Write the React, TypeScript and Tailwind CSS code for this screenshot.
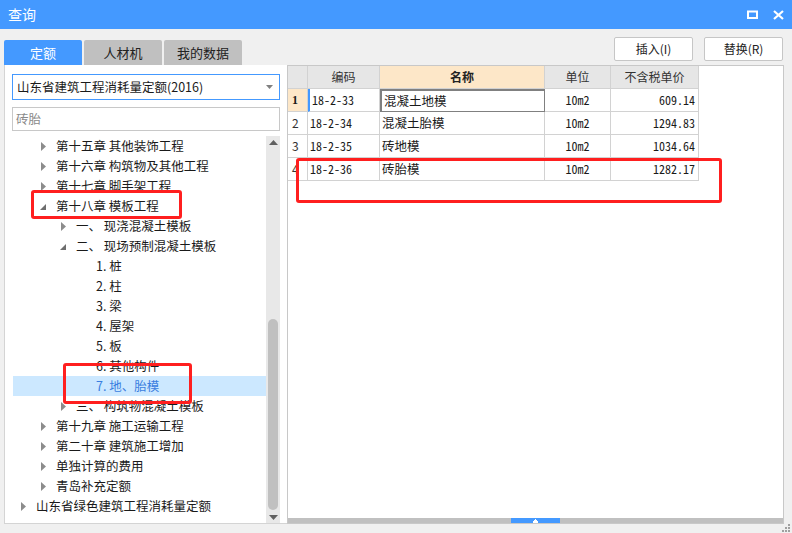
import React from "react";

type Node = {
  label: string;
  level: 0 | 1 | 2 | 3;
  state: "collapsed" | "expanded" | "leaf";
  selected?: boolean;
};

const tree: Node[] = [
  { label: "第十五章 其他装饰工程", level: 1, state: "collapsed" },
  { label: "第十六章 构筑物及其他工程", level: 1, state: "collapsed" },
  { label: "第十七章 脚手架工程", level: 1, state: "collapsed" },
  { label: "第十八章 模板工程", level: 1, state: "expanded" },
  { label: "一、 现浇混凝土模板", level: 2, state: "collapsed" },
  { label: "二、 现场预制混凝土模板", level: 2, state: "expanded" },
  { label: "1. 桩", level: 3, state: "leaf" },
  { label: "2. 柱", level: 3, state: "leaf" },
  { label: "3. 梁", level: 3, state: "leaf" },
  { label: "4. 屋架", level: 3, state: "leaf" },
  { label: "5. 板", level: 3, state: "leaf" },
  { label: "6. 其他构件", level: 3, state: "leaf" },
  { label: "7. 地、胎模", level: 3, state: "leaf", selected: true },
  { label: "三、 构筑物混凝土模板", level: 2, state: "collapsed" },
  { label: "第十九章 施工运输工程", level: 1, state: "collapsed" },
  { label: "第二十章 建筑施工增加", level: 1, state: "collapsed" },
  { label: "单独计算的费用", level: 1, state: "collapsed" },
  { label: "青岛补充定额", level: 1, state: "collapsed" },
  { label: "山东省绿色建筑工程消耗量定额", level: 0, state: "collapsed" },
];

const indent = ["pl-[7px]", "pl-[27px]", "pl-[47px]", "pl-[67px]"];

const rows = [
  { code: "18-2-33", name: "混凝土地模", unit: "10m2", price: "609.14" },
  { code: "18-2-34", name: "混凝土胎模", unit: "10m2", price: "1294.83" },
  { code: "18-2-35", name: "砖地模", unit: "10m2", price: "1034.64" },
  { code: "18-2-36", name: "砖胎模", unit: "10m2", price: "1282.17" },
];

const mono = "font-['Noto_Sans_Mono_CJK_SC','Liberation_Mono',monospace]";

function Arrow({ state }: { state: Node["state"] }) {
  if (state === "leaf") return <span className="w-4 shrink-0" />;
  if (state === "expanded")
    return (
      <span className="w-4 shrink-0 flex items-center">
        <svg width="6" height="6" className="mt-[2px]">
          <polygon points="6,0 6,6 0,6" fill="#6e6e6e" />
        </svg>
      </span>
    );
  return (
    <span className="w-4 shrink-0 flex items-center pl-[1px]">
      <svg width="5" height="9">
        <polygon points="0,0 5,4.5 0,9" fill="#8c8c8c" />
      </svg>
    </span>
  );
}

export default function App() {
  return (
    <div className="relative w-[792px] h-[533px] bg-[#f0f0f0] flex flex-col overflow-hidden font-['Noto_Sans_CJK_SC','Liberation_Sans',sans-serif] text-[12px] text-[#1a1a1a]">
      {/* title bar */}
      <div className="h-[29px] shrink-0 bg-[#4499ff] flex items-center justify-between pl-[8px] pr-[8px]">
        <span className="text-white text-[14px]">查询</span>
        <div className="flex items-center gap-[15px]">
          <svg width="11" height="9" viewBox="0 0 11 9">
            <rect x="1" y="1.5" width="9" height="6.5" fill="none" stroke="white" strokeWidth="2" />
          </svg>
          <svg width="11" height="10" viewBox="0 0 11 10">
            <path d="M1 1 L10 9 M10 1 L1 9" stroke="white" strokeWidth="2.2" />
          </svg>
        </div>
      </div>

      {/* tabs + buttons */}
      <div className="h-[36px] shrink-0 flex justify-between pl-[4px] pr-[9px]">
        <div className="flex items-end gap-[2px]">
          <div className="w-[78px] h-[25px] rounded-t-[2px] bg-[#4499ff] text-white text-[13px] flex items-center justify-center">定额</div>
          <div className="w-[78px] h-[25px] rounded-t-[2px] bg-[#c0c0c0] text-[#222] text-[13px] flex items-center justify-center">人材机</div>
          <div className="w-[78px] h-[25px] rounded-t-[2px] bg-[#c0c0c0] text-[#222] text-[13px] flex items-center justify-center">我的数据</div>
        </div>
        <div className="flex gap-[11px] pt-[8px]">
          <button className="w-[79px] h-[24px] bg-white border border-[#c6c6c6] rounded-[2px] text-[12px] text-[#222]">插入(I)</button>
          <button className="w-[79px] h-[24px] bg-white border border-[#c6c6c6] rounded-[2px] text-[12px] text-[#222]">替换(R)</button>
        </div>
      </div>

      {/* content */}
      <div className="h-[459px] shrink-0 flex pl-[4px]">
        {/* left panel */}
        <div className="w-[283px] bg-white border-l border-b border-[#d4d4d4] flex flex-col pl-[7px] pr-[7px]">
          <div className="mt-[9px] h-[26px] border border-[#4499ff] flex items-center justify-between pl-[4px] pr-[6px] bg-white">
            <span className="text-[12.5px]">山东省建筑工程消耗量定额(2016)</span>
            <svg width="7" height="4">
              <polygon points="0,0 7,0 3.5,4" fill="#808080" />
            </svg>
          </div>
          <div className="mt-[7px] h-[24px] border border-[#c8c8c8] flex items-center pl-[3px] text-[#8a8a8a] text-[12.5px]">砖胎</div>
          <div className="mt-[5px] h-[387px] flex">
            <div className="flex-1 flex flex-col pl-[1px]">
              {tree.map((n) => (
                <div
                  key={n.label}
                  className={`h-[20px] flex items-center ${indent[n.level]} ${n.selected ? "bg-[#cce8ff] text-[#3a7ee0]" : ""}`}
                >
                  <Arrow state={n.state} />
                  <span className="text-[12.5px] whitespace-nowrap">{n.label}</span>
                </div>
              ))}
            </div>
            {/* scrollbar */}
            <div className="w-[14px] bg-[#e8e8e8] flex flex-col items-center">
              <svg width="9" height="5" className="mt-[4px]">
                <polygon points="4.5,0 9,5 0,5" fill="#606060" />
              </svg>
              <div className="mt-[174px] w-[10px] h-[191px] rounded-full bg-[#c0c0c0]" />
              <svg width="9" height="5" className="mt-[5px]">
                <polygon points="0,0 9,0 4.5,5" fill="#606060" />
              </svg>
            </div>
          </div>
        </div>

        {/* right panel */}
        <div className="w-[497px] bg-white border border-[#c8c8c8] flex flex-col">
          <div className="grid grid-cols-[20px_72px_165px_66px_88px] w-[408px]">
            <div className="h-[23px] bg-[#e6e6e6] border-r border-b border-[#d2d2d2]" />
            <div className="h-[23px] bg-[#e6e6e6] border-r border-b border-[#d2d2d2] flex items-center justify-center text-[#333]">编码</div>
            <div className="h-[23px] bg-[#fde7c8] border-r border-b border-[#d2d2d2] flex items-center justify-center font-bold text-[#222]">名称</div>
            <div className="h-[23px] bg-[#e6e6e6] border-r border-b border-[#d2d2d2] flex items-center justify-center text-[#333]">单位</div>
            <div className="h-[23px] bg-[#e6e6e6] border-r border-b border-[#d2d2d2] flex items-center justify-center text-[#333]">不含税单价</div>
            {rows.map((r, i) => (
              <React.Fragment key={r.code}>
                <div
                  className={`h-[23px] border-r border-b border-[#d2d2d2] flex items-center pl-[4px] ${
                    i === 0 ? "bg-[#fde7c8] font-bold font-['Liberation_Serif',serif]" : "text-[#333]"
                  }`}
                >
                  {i + 1}
                </div>
                <div
                  className={`h-[23px] border-r border-b border-[#d2d2d2] flex items-center pl-[2px] ${mono} ${
                    i === 0 ? "border-l-2 border-l-[#4499ff] pl-0" : ""
                  }`}
                >
                  {r.code}
                </div>
                <div
                  className={`h-[23px] border-r border-b flex items-center pl-[2px] text-[12.5px] ${
                    i === 0 ? "border-2 border-[#808080]" : "border-[#d2d2d2]"
                  }`}
                >
                  {r.name}
                </div>
                <div className={`h-[23px] border-r border-b border-[#d2d2d2] flex items-center justify-center ${mono}`}>{r.unit}</div>
                <div className={`h-[23px] border-r border-b border-[#d2d2d2] flex items-center justify-end pr-[3px] ${mono}`}>{r.price}</div>
              </React.Fragment>
            ))}
          </div>
          <div className="flex-1" />
          <div className="h-[5px] bg-[#c0c0c0] flex justify-center">
            <div className="w-[49px] h-[5px] bg-[#4499ff] flex items-center justify-center">
              <svg width="7" height="4">
                <rect x="3" y="0" width="1" height="1" fill="white" />
                <rect x="2" y="1" width="3" height="1" fill="white" />
                <rect x="1" y="2" width="5" height="2" fill="white" />
              </svg>
            </div>
          </div>
        </div>
      </div>

      {/* bottom strip with grip */}
      <div className="flex-1 flex justify-end items-end pr-[2px] pb-[1px]">
        <svg width="8" height="8">
          <rect x="6" y="0" width="2" height="2" fill="#a0a0a0" />
          <rect x="3" y="3" width="2" height="2" fill="#a0a0a0" />
          <rect x="6" y="3" width="2" height="2" fill="#a0a0a0" />
          <rect x="0" y="6" width="2" height="2" fill="#a0a0a0" />
          <rect x="3" y="6" width="2" height="2" fill="#a0a0a0" />
          <rect x="6" y="6" width="2" height="2" fill="#a0a0a0" />
        </svg>
      </div>

      {/* red annotation boxes */}
      <div className="absolute left-[31px] top-[190px] w-[151px] h-[29px] border-[3px] border-[#ff1f1f] rounded-[3px]" />
      <div className="absolute left-[63px] top-[363px] w-[129px] h-[41px] border-[3px] border-[#ff1f1f] rounded-[3px]" />
      <div className="absolute left-[296px] top-[158px] w-[426px] h-[45px] border-[3px] border-[#ff1f1f] rounded-[3px]" />
    </div>
  );
}
